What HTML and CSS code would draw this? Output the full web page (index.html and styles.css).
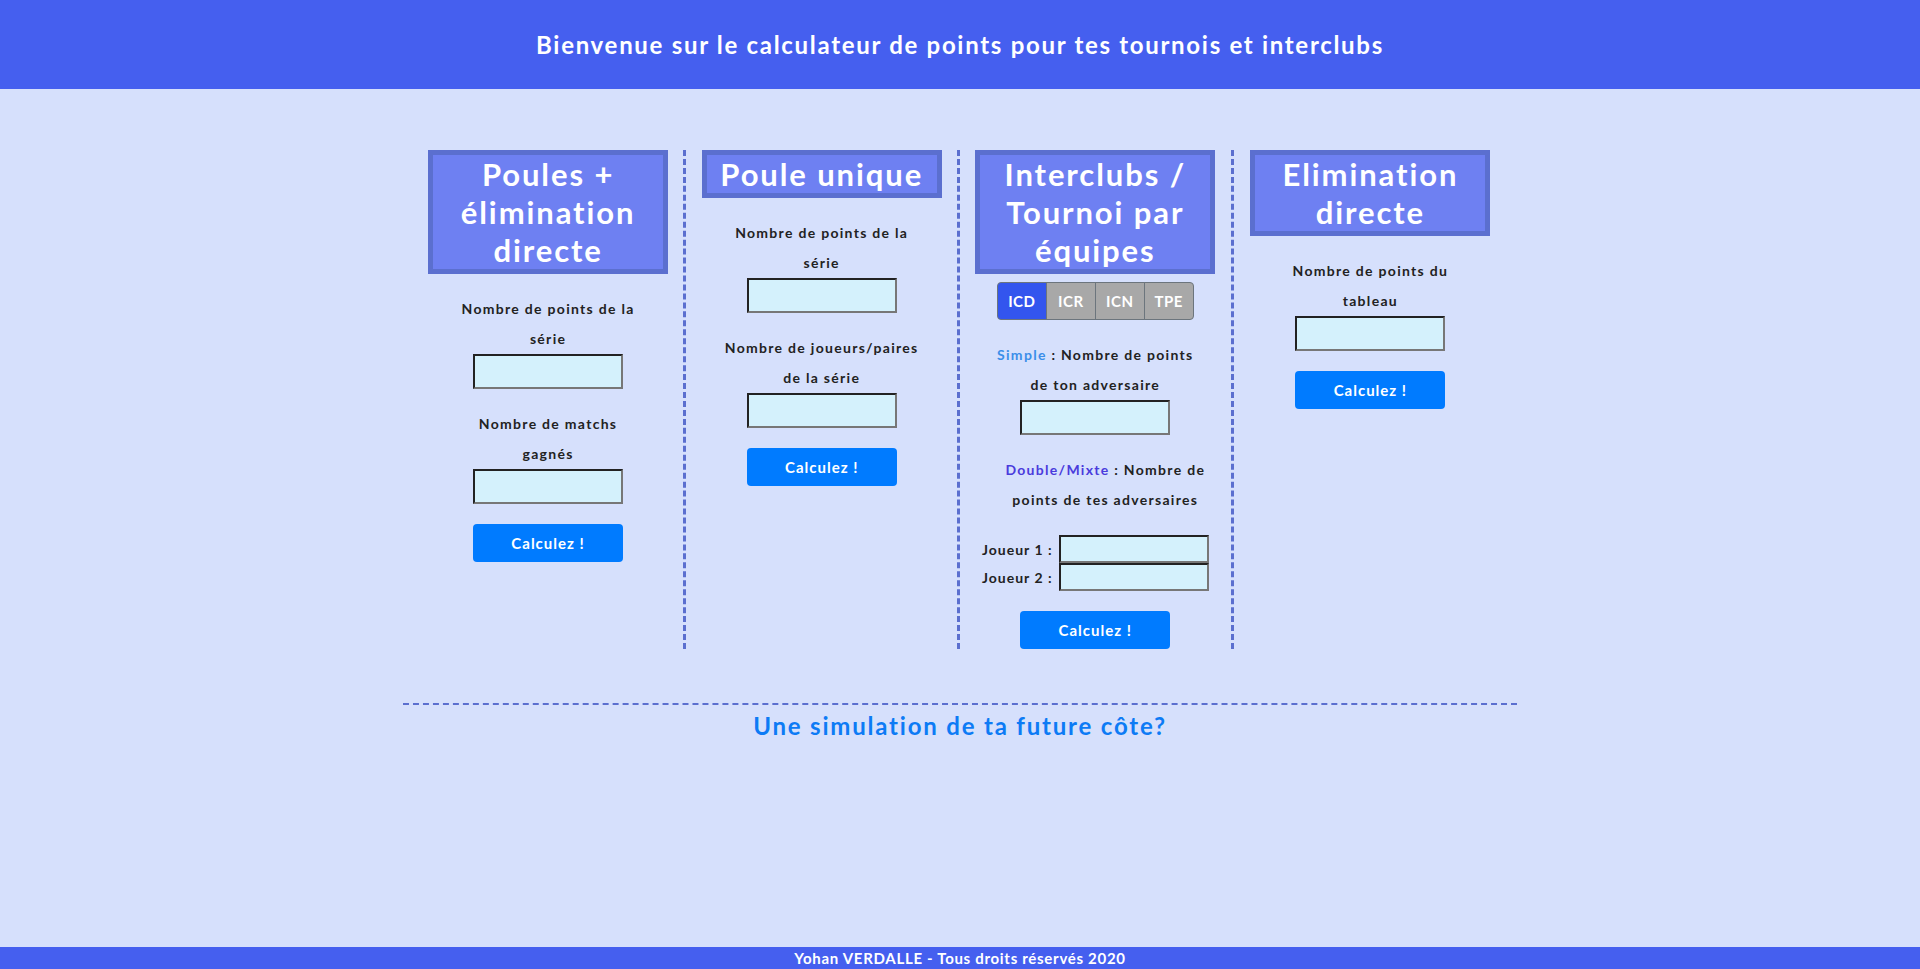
FILE: index.html
```html
<!DOCTYPE html>
<html lang="fr">
<head>
<meta charset="utf-8">
<title>Calculateur de points</title>
<link rel="stylesheet" href="styles.css">
</head>
<body>
<div class="page">
  <header class="topbar">
    <h1 class="topbar-title">Bienvenue sur le calculateur de points pour tes tournois et interclubs</h1>
  </header>

  <main class="main">
    <section class="columns">
      <div class="col">
        <h2 class="col-title">Poules + élimination directe</h2>
        <p class="label">Nombre de points de la<br>série</p>
        <input class="field" type="text">
        <p class="label">Nombre de matchs<br>gagnés</p>
        <input class="field" type="text">
        <button class="btn">Calculez !</button>
      </div>

      <div class="col">
        <h2 class="col-title">Poule unique</h2>
        <p class="label">Nombre de points de la<br>série</p>
        <input class="field" type="text">
        <p class="label">Nombre de joueurs/paires<br>de la série</p>
        <input class="field" type="text">
        <button class="btn">Calculez !</button>
      </div>

      <div class="col">
        <h2 class="col-title">Interclubs / Tournoi par équipes</h2>
        <div class="tabs">
          <span class="tab tab-active">ICD</span>
          <span class="tab">ICR</span>
          <span class="tab">ICN</span>
          <span class="tab">TPE</span>
        </div>
        <p class="label"><span class="simple">Simple</span> : Nombre de points<br>de ton adversaire</p>
        <input class="field" type="text">
        <p class="label label-shift"><span class="double">Double/Mixte</span> : Nombre de<br>points de tes adversaires</p>
        <div class="players">
          <div class="player-row"><span class="player-label">Joueur 1 :</span><input class="field field-small" type="text"></div>
          <div class="player-row"><span class="player-label">Joueur 2 :</span><input class="field field-small" type="text"></div>
        </div>
        <button class="btn">Calculez !</button>
      </div>

      <div class="col">
        <h2 class="col-title">Elimination directe</h2>
        <p class="label">Nombre de points du<br>tableau</p>
        <input class="field" type="text">
        <button class="btn">Calculez !</button>
      </div>
    </section>

    <hr class="divider">
    <h3 class="simulation">Une simulation de ta future côte?</h3>
  </main>

  <footer class="footer">Yohan VERDALLE - Tous droits réservés 2020</footer>
</div>
</body>
</html>
```

FILE: styles.css
```css
* {
  box-sizing: border-box;
}

html, body {
  margin: 0;
  padding: 0;
}

body {
  background: #d6e0fc;
  font-family: "Lato", "Noto Sans", sans-serif;
  color: #222;
}

.page {
  height: 100vh;
  display: flex;
  flex-direction: column;
  overflow: hidden;
}

.topbar {
  flex: none;
  height: 89px;
  background: #455fef;
  display: flex;
  align-items: center;
  justify-content: center;
}

.topbar-title {
  margin: 0;
  color: #fff;
  font-size: 24px;
  font-weight: 700;
  letter-spacing: 1.7px;
}

.main {
  flex: 1;
  display: flex;
  flex-direction: column;
  align-items: center;
}

.columns {
  width: 57%;
  margin-top: 61px;
  display: flex;
}

.col {
  flex: 0 0 25%;
  display: flex;
  flex-direction: column;
  align-items: center;
  border-right: 3px dashed #5b6fcf;
}

.col:last-child {
  border-right: none;
}

.col-title {
  width: 240px;
  margin: 0;
  padding: 0 2px;
  background: #6e80f2;
  border: 5px solid #5b6fcf;
  color: #fff;
  font-size: 31px;
  line-height: 38px;
  font-weight: 700;
  letter-spacing: 1.9px;
  text-align: center;
}

.label {
  margin: 20px 0 0;
  font-size: 14px;
  line-height: 30px;
  font-weight: 700;
  letter-spacing: 1.3px;
  text-align: center;
}

.label-shift {
  padding-left: 20px;
}

.simple {
  color: #3b8ee9;
}

.double {
  color: #4a3bdc;
}

.field {
  width: 150px;
  height: 35px;
  background: #d4f1fc;
  border-style: solid;
  border-width: 2px;
  border-color: #222 #777 #777 #222;
  padding: 0;
  margin: 0;
  font: inherit;
}

.field-small {
  height: 28px;
}

.btn {
  width: 150px;
  height: 38px;
  margin-top: 20px;
  border: none;
  border-radius: 4px;
  background: #007bff;
  color: #fff;
  font-family: inherit;
  font-size: 15px;
  font-weight: 700;
  letter-spacing: 1px;
}

.tabs {
  margin-top: 8px;
  display: flex;
  width: 197px;
  height: 38px;
}

.tab {
  flex: 1;
  display: flex;
  align-items: center;
  justify-content: center;
  background: #a8a8a8;
  border: 1px solid #6c757d;
  margin-left: -1px;
  color: #fff;
  font-size: 15px;
  font-weight: 700;
  letter-spacing: 0.5px;
}

.tab:first-child {
  margin-left: 0;
  border-radius: 4px 0 0 4px;
}

.tab:last-child {
  border-radius: 0 4px 4px 0;
}

.tab-active {
  background: #3355ee;
}

.players {
  margin-top: 20px;
  display: flex;
  flex-direction: column;
  align-items: center;
}

.player-row {
  display: flex;
  align-items: center;
  gap: 6px;
}

.player-label {
  font-size: 14px;
  font-weight: 700;
  letter-spacing: 1px;
}

.divider {
  width: 58%;
  margin: 54px 0 0;
  border: none;
  border-top: 2px dashed #5b6fcf;
}

.simulation {
  margin: 6px 0 0;
  color: #0d7bf5;
  font-size: 24px;
  font-weight: 700;
  letter-spacing: 1.8px;
}

.footer {
  flex: none;
  height: 22px;
  background: #455fef;
  color: #fff;
  font-size: 15px;
  font-weight: 700;
  line-height: 22px;
  text-align: center;
  letter-spacing: 0.7px;
}
```
